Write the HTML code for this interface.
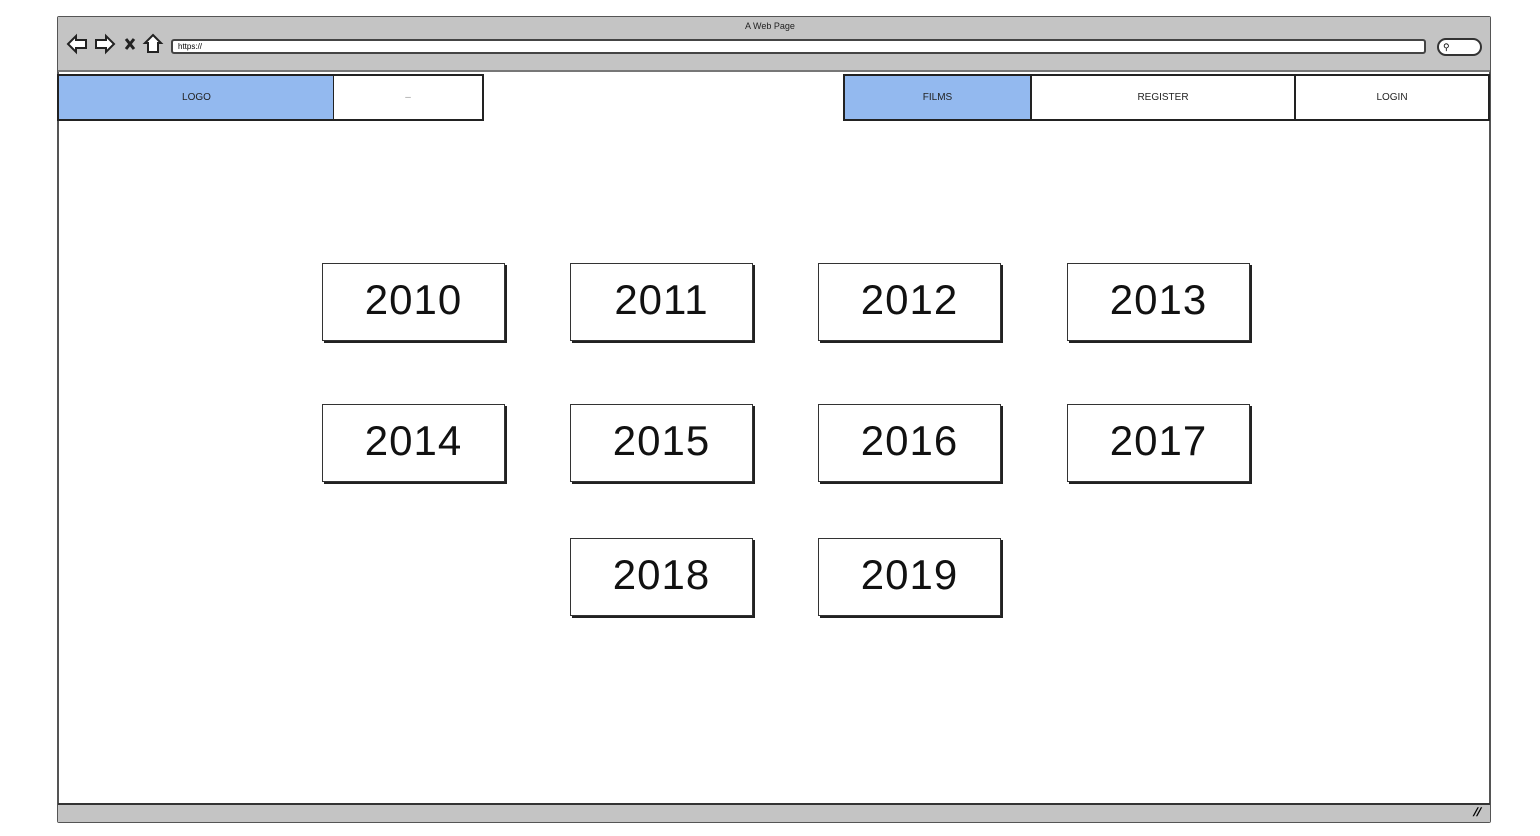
<!DOCTYPE html>
<html><head><style>
*{margin:0;padding:0;box-sizing:border-box}
body{width:1540px;height:836px;background:#fff;position:relative;overflow:hidden;font-family:"Liberation Sans",sans-serif}
.a{position:absolute}
.frame{left:57px;top:16px;width:1434px;height:807px;border:2px solid #555;border-radius:2px}
.top{left:58px;top:17px;width:1432px;height:55px;background:#c4c4c4;border-bottom:2px solid #777}
.bot{left:58px;top:803px;width:1432px;height:19px;background:#c4c4c4;border-top:2px solid #333}
.nav{top:74px;height:47px;border:2px solid #222;font-size:10px;display:flex;align-items:center;justify-content:center;color:#222}
.y{width:183px;height:78px;border:1.5px solid #333;box-shadow:2px 2px 0 #222;display:flex;align-items:center;justify-content:center;font-size:42px;color:#111;letter-spacing:1px;background:#fff;padding-bottom:4px}
</style></head><body>
<div class="a frame"></div>
<div class="a top"></div>
<div class="a" style="left:745px;top:21px;font-size:9px;color:#222">A Web Page</div>
<svg class="a" style="left:66px;top:32px" width="100" height="24" viewBox="0 0 100 24" fill="#fff" stroke="#222" stroke-width="2">
<path d="M2 12 L10 4 V8 H20 V16 H10 V20 Z"/>
<path d="M48 12 L40 4 V8 H30 V16 H40 V20 Z"/>
<path d="M60 7 L68 17 M68 7 L60 17" stroke-width="3"/>
<path d="M87 3 L95 11 H92 V20 H82 V11 H79 Z"/>
</svg>
<div class="a" style="left:171px;top:39px;width:1255px;height:15px;background:#fff;border:2px solid #444;border-radius:3px;font-size:8px;padding-left:5px;line-height:11px">https://</div>
<div class="a" style="left:1437px;top:38px;width:45px;height:18px;background:#fff;border:2px solid #333;border-radius:9px;font-size:9px;padding-left:4px;line-height:14px">&#9906;</div>
<div class="a nav" style="left:57px;width:278px;background:#93b9ef;border-right:1px solid #222">LOGO</div>
<div class="a nav" style="left:333px;width:151px;background:#fff;border-left:1px solid #222;color:#999">–</div>
<div class="a nav" style="left:843px;width:189px;background:#93b9ef">FILMS</div>
<div class="a nav" style="left:1030px;width:266px;background:#fff">REGISTER</div>
<div class="a nav" style="left:1294px;width:196px;background:#fff">LOGIN</div>
<div class="a bot"></div>
<div class="a" style="left:1474px;top:805px;font-size:12px;font-weight:bold;transform:skewX(-20deg)">//</div>
<div class="a y" style="left:322px;top:263px">2010</div>
<div class="a y" style="left:570px;top:263px">2011</div>
<div class="a y" style="left:818px;top:263px">2012</div>
<div class="a y" style="left:1067px;top:263px">2013</div>
<div class="a y" style="left:322px;top:404px">2014</div>
<div class="a y" style="left:570px;top:404px">2015</div>
<div class="a y" style="left:818px;top:404px">2016</div>
<div class="a y" style="left:1067px;top:404px">2017</div>
<div class="a y" style="left:570px;top:538px">2018</div>
<div class="a y" style="left:818px;top:538px">2019</div>
</body></html>
